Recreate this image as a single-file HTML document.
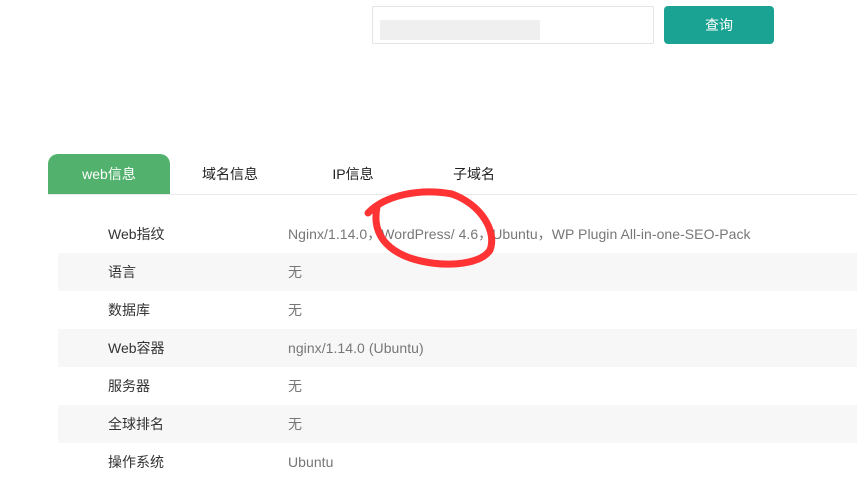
<!DOCTYPE html>
<html><head><meta charset="utf-8"><style>
body{margin:0;width:857px;height:478px;background:#fff;font-family:"Liberation Sans","Noto Sans CJK SC",sans-serif;position:relative;overflow:hidden}
.inp{position:absolute;left:372px;top:6px;width:282px;height:38px;border:1px solid #e2e4e6;border-radius:2px;box-sizing:border-box}
.blur{position:absolute;left:380px;top:20px;width:160px;height:20px;background:#efefef}
.btn{position:absolute;left:664px;top:6px;width:110px;height:38px;background:#1aa292;border-radius:4px;color:#fff;font-size:14px;text-align:center;line-height:38px}
.tabline{position:absolute;left:48px;top:194px;width:809px;height:1px;background:#e8e8e8}
.tab{position:absolute;top:154px;height:40px;line-height:40px;font-size:14px;color:#222;text-align:center}
.t0{left:48px;width:122px;background:#52b26d;color:#fff;border-radius:10px 10px 0 0}
.row{position:absolute;left:58px;width:799px;height:38px;line-height:38px;font-size:14px}
.row.s{background:#f7f7f7}
.row .l{position:absolute;left:50px;color:#333}
.row .v{position:absolute;left:230px;color:#777;letter-spacing:0.05px}
</style></head><body>
<div class="inp"></div><div class="blur"></div>
<div class="btn">查询</div>
<div class="tab t0">web信息</div>
<div class="tab" style="left:170px;width:120px">域名信息</div>
<div class="tab" style="left:293px;width:120px">IP信息</div>
<div class="tab" style="left:414px;width:120px">子域名</div>
<div class="tabline"></div>
<div class="row" style="top:215px"><span class="l">Web指纹</span><span class="v">Nginx/1.14.0，WordPress/ 4.6，Ubuntu，WP Plugin All-in-one-SEO-Pack</span></div>
<div class="row s" style="top:253px"><span class="l">语言</span><span class="v">无</span></div>
<div class="row" style="top:291px"><span class="l">数据库</span><span class="v">无</span></div>
<div class="row s" style="top:329px"><span class="l">Web容器</span><span class="v">nginx/1.14.0 (Ubuntu)</span></div>
<div class="row" style="top:367px"><span class="l">服务器</span><span class="v">无</span></div>
<div class="row s" style="top:405px"><span class="l">全球排名</span><span class="v">无</span></div>
<div class="row" style="top:443px"><span class="l">操作系统</span><span class="v">Ubuntu</span></div>
<svg style="position:absolute;left:0;top:0" width="857" height="478"><path d="M368 213 C385 195 420 188 452 194 C482 205 497 232 490 250 C480 266 440 268 410 258 C385 249 372 232 377 207" fill="none" stroke="#f33" stroke-width="7" stroke-linecap="round"/></svg>
</body></html>
